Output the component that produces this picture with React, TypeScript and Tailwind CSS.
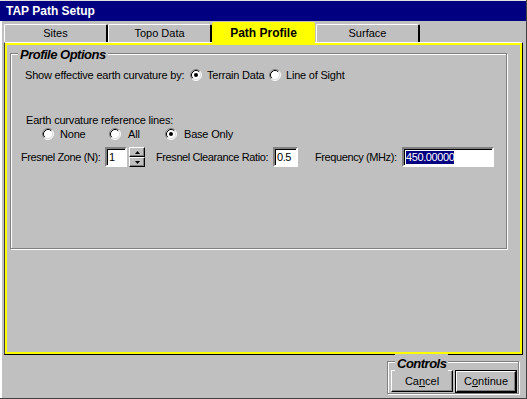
import React from 'react';

// Win95-style bevels, written out as full class strings
const raised = '[border-color:#fff_#000_#000_#fff] border shadow-[inset_-1px_-1px_0_#808080]';
const sunken = '[border-color:#808080_#fff_#fff_#808080] border-2 shadow-[inset_1px_1px_0_#000]';
const etched = 'border border-[#808080] shadow-[1px_1px_0_#fff,inset_1px_1px_0_#fff]';

function Radio({ checked }: { checked?: boolean }) {
  return (
    <svg width="12" height="12" viewBox="0 0 12 12" className="shrink-0">
      <circle cx="6" cy="6" r="5" fill="#fff" />
      <path d="M9.89 2.11 A5.5 5.5 0 0 0 2.11 9.89" fill="none" stroke="#808080" />
      <path d="M9.18 2.82 A4.5 4.5 0 0 0 2.82 9.18" fill="none" stroke="#000" />
      <path d="M9.89 2.11 A5.5 5.5 0 0 1 2.11 9.89" fill="none" stroke="#fff" />
      <path d="M9.18 2.82 A4.5 4.5 0 0 1 2.82 9.18" fill="none" stroke="#dfdfdf" />
      {checked && <circle cx="6" cy="6" r="2" fill="#000" />}
    </svg>
  );
}

function Tab({ label, active }: { label: string; active?: boolean }) {
  if (active) {
    return (
      <div className="relative z-10 shrink-0 mt-[1px] h-[22px] w-[103px] mr-[1px] bg-[#ffff00] flex items-center justify-center text-[12px] font-bold text-black rounded-t-[2px]">
        {label}
      </div>
    );
  }
  return (
    <div className="shrink-0 mt-[3px] h-[18px] w-[104px] bg-[#c0c0c0] border-t border-l border-t-white border-l-white border-r-2 [border-right-color:#000] rounded-t-[2px] flex items-center justify-center text-[11px] text-black">
      {label}
    </div>
  );
}

function Field({ value, width, selected }: { value: string; width: string; selected?: boolean }) {
  return (
    <div className={`${width} shrink-0 h-[20px] bg-white ${sunken} flex items-center pl-[2px] text-[11px] text-black`}>
      {selected ? <span className="bg-[#000080] text-white leading-[13px]">{value}</span> : value}
    </div>
  );
}

function Spin() {
  return (
    <div className="shrink-0 ml-[2px] w-[16px] h-[20px] flex flex-col">
      <div className={`h-[10px] bg-[#c0c0c0] ${raised} flex items-center justify-center`}>
        <svg width="5" height="3" viewBox="0 0 5 3"><path d="M2.5 0 L5 3 L0 3 Z" fill="#000" /></svg>
      </div>
      <div className={`h-[10px] bg-[#c0c0c0] ${raised} flex items-center justify-center`}>
        <svg width="5" height="3" viewBox="0 0 5 3"><path d="M0 0 L5 0 L2.5 3 Z" fill="#000" /></svg>
      </div>
    </div>
  );
}

export default function App() {
  return (
    <div className="w-[527px] h-[399px] bg-[#c0c0c0] flex flex-col border-r border-b border-[#404040] shadow-[inset_2px_0_0_#fff] font-['Liberation_Sans',Arial,sans-serif] text-black overflow-hidden whitespace-nowrap">
      {/* title bar */}
      <div className="h-[21px] border-t border-t-[#dfdfdf] bg-[#000080] flex items-center pl-[6px] text-white text-[12px] font-bold">
        TAP Path Setup
      </div>

      {/* tabs */}
      <div className="h-[21px] flex items-start pl-[4px]">
        <Tab label="Sites" />
        <Tab label="Topo Data" />
        <Tab label="Path Profile" active />
        <Tab label="Surface" />
      </div>

      {/* tab page */}
      <div className="ml-[4px] w-[519px] h-[313px] border border-t-white border-l-[#404040] border-r-black border-b-black">
        <div className="h-full border-2 border-[#ffff00] pl-[3px] pt-[8px]">
          <div className={`relative w-[497px] h-[196px] ${etched} flex flex-col text-[11px] tracking-[-0.2px]`}>
            <span className="absolute left-[7px] top-[-9px] px-[2px] bg-[#c0c0c0] text-[13px] font-bold italic tracking-[-0.5px]">
              Profile Options
            </span>

            <div className="mt-[14px] h-[14px] pl-[14px] flex items-center">
              <span className="w-[165px] shrink-0">Show effective earth curvature by:</span>
              <Radio checked />
              <span className="ml-[5px] w-[62px] shrink-0">Terrain Data</span>
              <Radio />
              <span className="ml-[5px]">Line of Sight</span>
            </div>

            <div className="mt-[31px] h-[14px] pl-[15px] flex items-center">Earth curvature reference lines:</div>

            <div className="h-[14px] pl-[31px] flex items-center">
              <div className="w-[67px] shrink-0 flex items-center gap-[6px]"><Radio />None</div>
              <div className="w-[56px] shrink-0 flex items-center gap-[7px]"><Radio />All</div>
              <div className="flex items-center gap-[7px]"><Radio checked />Base Only</div>
            </div>

            <div className="mt-[6px] h-[20px] pl-[10px] flex items-center tracking-[-0.4px]">
              <span className="w-[84px] shrink-0">Fresnel Zone (N):</span>
              <Field value="1" width="w-[22px]" />
              <Spin />
              <span className="ml-[11px] w-[117px] shrink-0">Fresnel Clearance Ratio:</span>
              <Field value="0.5" width="w-[25px]" />
              <span className="ml-[17px] w-[87px] shrink-0">Frequency (MHz):</span>
              <Field value="450.00000" width="w-[92px]" selected />
            </div>
          </div>
        </div>
      </div>

      {/* controls */}
      <div className="flex-1 flex justify-end pr-[7px] pt-[6px]">
        <div className={`relative w-[132px] h-[33px] ${etched} flex items-start pl-[3px] pt-[8px] gap-[2px] text-[11px]`}>
          <span className="absolute left-[7px] top-[-8px] px-[2px] bg-[#c0c0c0] text-[13px] font-bold italic tracking-[-0.5px]">
            Controls
          </span>
          <div className={`w-[62px] h-[22px] shrink-0 bg-[#c0c0c0] ${raised} flex items-center justify-center`}>
            <span>Ca<span className="underline">n</span>cel</span>
          </div>
          <div className="w-[62px] h-[23px] shrink-0 border border-black">
            <div className={`h-full bg-[#c0c0c0] ${raised} flex items-center justify-center`}>
              <span>C<span className="underline">o</span>ntinue</span>
            </div>
          </div>
        </div>
      </div>
    </div>
  );
}
